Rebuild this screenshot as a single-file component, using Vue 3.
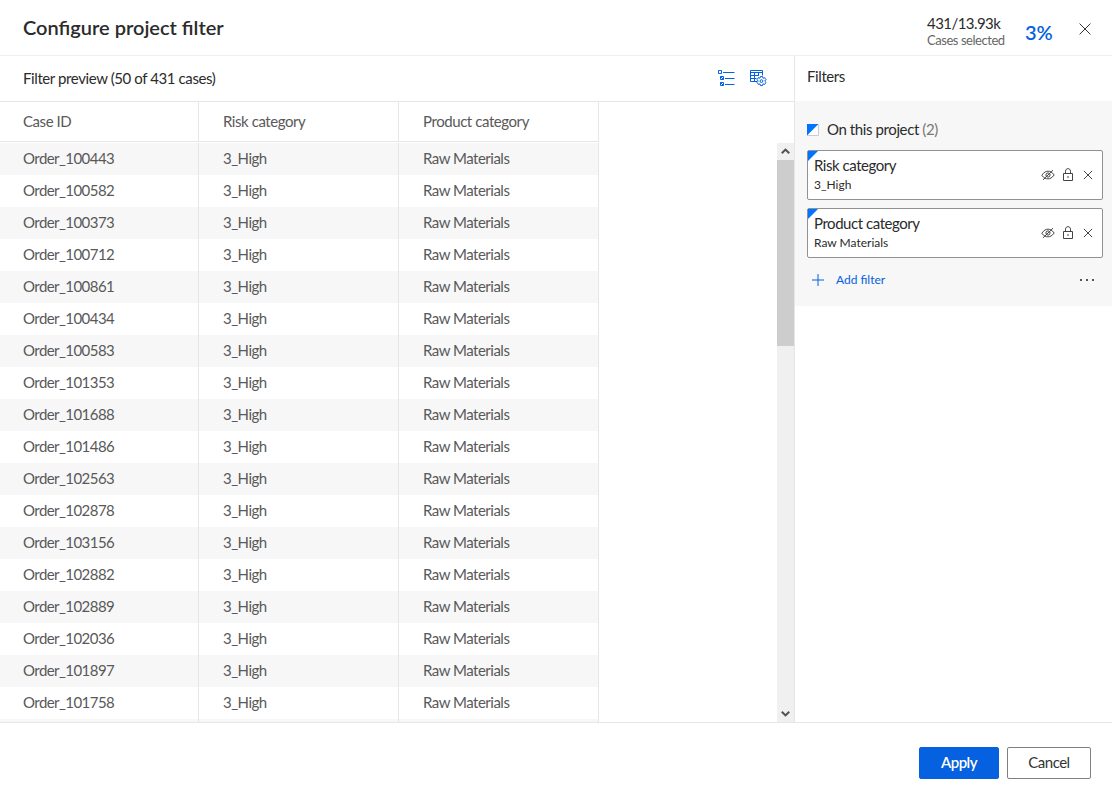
<template>
  <div class="dialog">
    <header class="dialog__header">
      <h1 class="dialog__title">Configure project filter</h1>
      <div class="summary">
        <div class="summary__cases">
          <span class="summary__count">431/13.93k</span>
          <span class="summary__label">Cases selected</span>
        </div>
        <span class="summary__percent">3%</span>
        <button class="icon-btn summary__close" type="button" aria-label="Close">
          <svg width="12" height="12" viewBox="0 0 12 12">
            <path d="M.6.6l10.8 10.8M11.4.6L.6 11.4" stroke="#333" fill="none" />
          </svg>
        </button>
      </div>
    </header>

    <main class="dialog__body">
      <section class="preview">
        <div class="preview__bar">
          <span class="preview__title">Filter preview (50 of 431 cases)</span>
          <div class="preview__tools">
            <button class="icon-btn" type="button" aria-label="Select fields">
              <svg width="17" height="17" viewBox="0 0 17 17" fill="none" stroke="#0561e0">
                <path d="M.5.5h3v3h-3zM2.500 6.500h3v3h-3zM2.500 12.500h3v3h-3z" />
                <path d="M2.500 6.500l3 3M2.500 12.500l3 3" />
                <path d="M5 2.500h11.500M7 8.500h9.500M7 14.500h9.500" />
              </svg>
            </button>
            <button class="icon-btn" type="button" aria-label="Table settings">
              <svg width="17" height="17" viewBox="0 0 17 17" fill="none" stroke="#0561e0">
                <path d="M7 11.500H.5V.5h12v5" />
                <path d="M0 2.500h13M.5 5.500h8M.5 8.500h6M4.500 2.500v9M8.500 2.500v3.500" />
                <path d="M10.500 6.500h2l.5 1.700 1.700-.5 1.300 2-1.300 1.400 1.300 1.300-1.300 2-1.700-.5-.5 1.700h-2l-.5-1.700-1.700.5-1.300-2 1.300-1.300-1.300-1.400 1.300-2 1.700.5z" />
                <circle cx="11.500" cy="11.100" r="1.400" />
              </svg>
            </button>
          </div>
        </div>

        <div class="table">
          <div class="table__head">
            <div v-for="column in columns" :key="column" class="table__cell">{{ column }}</div>
          </div>
          <div class="table__scroll">
            <div class="table__rows">
              <div v-for="id in orders" :key="id" class="table__row">
                <div class="table__cell">{{ id }}</div>
                <div class="table__cell">3_High</div>
                <div class="table__cell">Raw Materials</div>
              </div>
              <div class="table__row">
                <div v-for="column in columns" :key="column" class="table__cell"></div>
              </div>
            </div>
            <div class="scrollbar">
              <svg class="scrollbar__arrow" width="17" height="17" viewBox="0 0 17 17">
                <path d="M4.800 10.300l3.700-3.700 3.700 3.700" fill="none" stroke="#505050" stroke-width="2" />
              </svg>
              <div class="scrollbar__thumb"></div>
              <svg class="scrollbar__arrow scrollbar__arrow--down" width="17" height="17" viewBox="0 0 17 17">
                <path d="M4.800 6.700l3.700 3.700 3.700-3.700" fill="none" stroke="#505050" stroke-width="2" />
              </svg>
            </div>
          </div>
        </div>
      </section>

      <aside class="filters">
        <div class="filters__title">Filters</div>
        <div class="filters__group">
          <div class="group-title">
            <svg width="12" height="12" viewBox="0 0 12 12">
              <path d="M.5.5h11v11H.5z" fill="#fff" stroke="#ccc" />
              <path d="M0 0h11.500L0 11.500z" fill="#0073ff" />
            </svg>
            <span class="group-title__text">On this project <span class="group-title__count">(2)</span></span>
          </div>

          <div v-for="filter in filters" :key="filter.name" class="filter-card">
            <div class="filter-card__text">
              <span class="filter-card__name">{{ filter.name }}</span>
              <span class="filter-card__value">{{ filter.value }}</span>
            </div>
            <div class="filter-card__actions">
              <svg width="14" height="12" viewBox="0 0 14 12" fill="none" stroke="#444">
                <path d="M.8 6.300C3 3 5 2.200 7 2.200s4 .8 6.200 3.800C11 9 9 9.800 7 9.800S3 9.300.8 6.300z" />
                <circle cx="7" cy="6" r="2.100" />
                <path d="M2 10.800L12 1.200" />
              </svg>
              <svg width="10" height="14" viewBox="0 0 10 14" fill="none" stroke="#444">
                <path d="M.5 5.500h9v7h-9zM2.500 5.500V3.200c0-3.400 5-3.400 5 0v2.300" />
                <path d="M5 8v2" />
              </svg>
              <svg width="10" height="10" viewBox="0 0 10 10" fill="none" stroke="#444">
                <path d="M.9.9l8.200 8.200M9.100.9L.9 9.100" />
              </svg>
            </div>
          </div>

          <div class="filters__footer">
            <button class="add-filter" type="button">
              <svg width="12" height="12" viewBox="0 0 12 12">
                <path d="M6 0v12M0 6h12" stroke="#0561e0" />
              </svg>
              <span class="add-filter__label">Add filter</span>
            </button>
            <svg width="16" height="2" viewBox="0 0 16 2" fill="#555">
              <path d="M1 0h2v2H1zM7 0h2v2H7zM13 0h2v2h-2z" />
            </svg>
          </div>
        </div>
      </aside>
    </main>

    <footer class="dialog__footer">
      <button class="btn btn--primary" type="button">Apply</button>
      <button class="btn" type="button">Cancel</button>
    </footer>
  </div>
</template>

<script setup>
  const columns = ["Case ID", "Risk category", "Product category"];

  const orders = [
    "Order_100443",
    "Order_100582",
    "Order_100373",
    "Order_100712",
    "Order_100861",
    "Order_100434",
    "Order_100583",
    "Order_101353",
    "Order_101688",
    "Order_101486",
    "Order_102563",
    "Order_102878",
    "Order_103156",
    "Order_102882",
    "Order_102889",
    "Order_102036",
    "Order_101897",
    "Order_101758",
  ];

  const filters = [
    { name: "Risk category", value: "3_High" },
    { name: "Product category", value: "Raw Materials" },
  ];
</script>

<style>
body {
  margin: 0;
  overflow: hidden;
}
</style>

<style scoped>
.dialog {
  display: flex;
  flex-direction: column;
  box-sizing: border-box;
  height: 792px;
  background: #fff;
  color: #2b2b2b;
  font-family: Lato, "Liberation Sans", sans-serif;
  font-size: 15px;
  letter-spacing: -0.5px;
  line-height: 20px;
}

.dialog *,
.dialog *::before {
  box-sizing: border-box;
}

button {
  font-family: inherit;
  letter-spacing: inherit;
  cursor: pointer;
}

.icon-btn {
  display: flex;
  padding: 0;
  border: 0;
  background: none;
}

svg {
  display: block;
  flex-shrink: 0;
}

.dialog__header {
  display: flex;
  justify-content: space-between;
  flex-shrink: 0;
  height: 56px;
  padding: 0 21px 0 23px;
  border-bottom: 1px solid #f0f0f0;
}

.dialog__title {
  margin: 0;
  font-size: 20px;
  font-weight: 600;
  letter-spacing: 0;
  line-height: 54px;
}

.summary {
  display: flex;
}

.summary__cases {
  display: flex;
  flex-direction: column;
  width: 98px;
  padding-top: 15px;
}

.summary__count {
  letter-spacing: -0.55px;
  line-height: 17px;
}

.summary__label {
  color: #666;
  font-size: 13px;
  letter-spacing: -0.45px;
  line-height: 16px;
}

.summary__percent {
  width: 54px;
  padding-top: 19px;
  color: #0561e0;
  font-size: 20px;
  font-weight: 600;
  letter-spacing: 0;
  line-height: 26px;
}

.summary__close {
  align-self: flex-start;
  padding-top: 23px;
}

.dialog__body {
  display: flex;
  flex: 1;
  min-height: 0;
}

.preview {
  display: flex;
  flex-direction: column;
  width: 795px;
  border-right: 1px solid #e6e6e6;
}

.preview__bar {
  display: flex;
  justify-content: space-between;
  align-items: center;
  height: 46px;
  padding: 0 27px 0 23px;
  border-bottom: 1px solid #e6e6e6;
}

.preview__title {
  padding-bottom: 2px;
  letter-spacing: -0.4px;
}

.preview__tools {
  display: flex;
  gap: 15px;
}

.table {
  display: flex;
  flex-direction: column;
  flex: 1;
  min-height: 0;
  color: #595959;
}

.table__head {
  display: flex;
  width: 599px;
  height: 40px;
  margin-bottom: 1px;
  border-bottom: 1px solid #e6e6e6;
  letter-spacing: -0.43px;
  line-height: 39px;
}

.table__cell {
  width: 200px;
  padding-left: 24px;
  border-right: 1px solid #e6e6e6;
}

.table__cell:first-child {
  width: 199px;
  padding-left: 23px;
}

.table__scroll {
  display: flex;
  justify-content: space-between;
  flex: 1;
  min-height: 0;
}

.table__rows {
  width: 599px;
  overflow: hidden;
}

.table__row {
  display: flex;
  height: 32px;
  line-height: 31px;
}

.table__row .table__cell:first-child {
  letter-spacing: -0.56px;
}

.table__row:nth-child(odd) {
  background: #f7f7f7;
}

.scrollbar {
  display: flex;
  flex-direction: column;
  width: 17px;
  background: #f0f0f0;
}

.scrollbar__thumb {
  height: 186px;
  background: #cdcdcd;
}

.scrollbar__arrow--down {
  margin-top: auto;
}

.filters {
  flex: 1;
}

.filters__title {
  height: 45px;
  padding-left: 12px;
  letter-spacing: -0.4px;
  line-height: 41px;
}

.filters__group {
  height: 205px;
  padding: 19px 9px 0 12px;
  background: #f7f7f7;
}

.group-title {
  display: flex;
  align-items: center;
  gap: 8px;
  height: 20px;
  margin-bottom: 10px;
  letter-spacing: -0.4px;
}

.group-title__text {
  padding-bottom: 2px;
}

.group-title__count {
  color: #767676;
}

.filter-card {
  position: relative;
  display: flex;
  justify-content: space-between;
  align-items: center;
  height: 50px;
  margin-bottom: 8px;
  padding: 0 9px 0 6px;
  border: 1px solid #919191;
  border-radius: 2px;
  background: #fff;
}

.filter-card::before {
  content: "";
  position: absolute;
  top: 0;
  left: 0;
  border-top: 10px solid #0073ff;
  border-right: 10px solid transparent;
}

.filter-card__text {
  display: flex;
  flex-direction: column;
}

.filter-card__name {
  padding-bottom: 2px;
  letter-spacing: -0.45px;
  line-height: 18px;
}

.filter-card__value {
  font-size: 12px;
  letter-spacing: 0;
  line-height: 18px;
}

.filter-card__actions {
  display: flex;
  align-items: center;
  gap: 10px;
}

.filter-card__actions svg:first-child {
  margin-right: -2px;
}

.filters__footer {
  display: flex;
  justify-content: space-between;
  align-items: center;
  height: 28px;
  padding: 0 8px 0 5px;
}

.add-filter {
  display: flex;
  align-items: center;
  gap: 12px;
  padding: 0;
  border: 0;
  background: none;
  color: #0561e0;
  font-size: 12px;
  letter-spacing: 0;
}

.add-filter__label {
  padding-bottom: 1px;
}

.dialog__footer {
  display: flex;
  justify-content: flex-end;
  gap: 8px;
  flex-shrink: 0;
  height: 70px;
  padding: 24px 21px 0 0;
  border-top: 1px solid #e6e6e6;
}

.btn {
  width: 84px;
  height: 32px;
  padding: 0 0 2px;
  border: 1px solid #808080;
  border-radius: 2px;
  background: #fff;
  color: #333;
  font-size: 15px;
}

.btn--primary {
  width: 80px;
  border-color: #0561e0;
  background: #0561e0;
  color: #fff;
  font-weight: 600;
}
</style>
